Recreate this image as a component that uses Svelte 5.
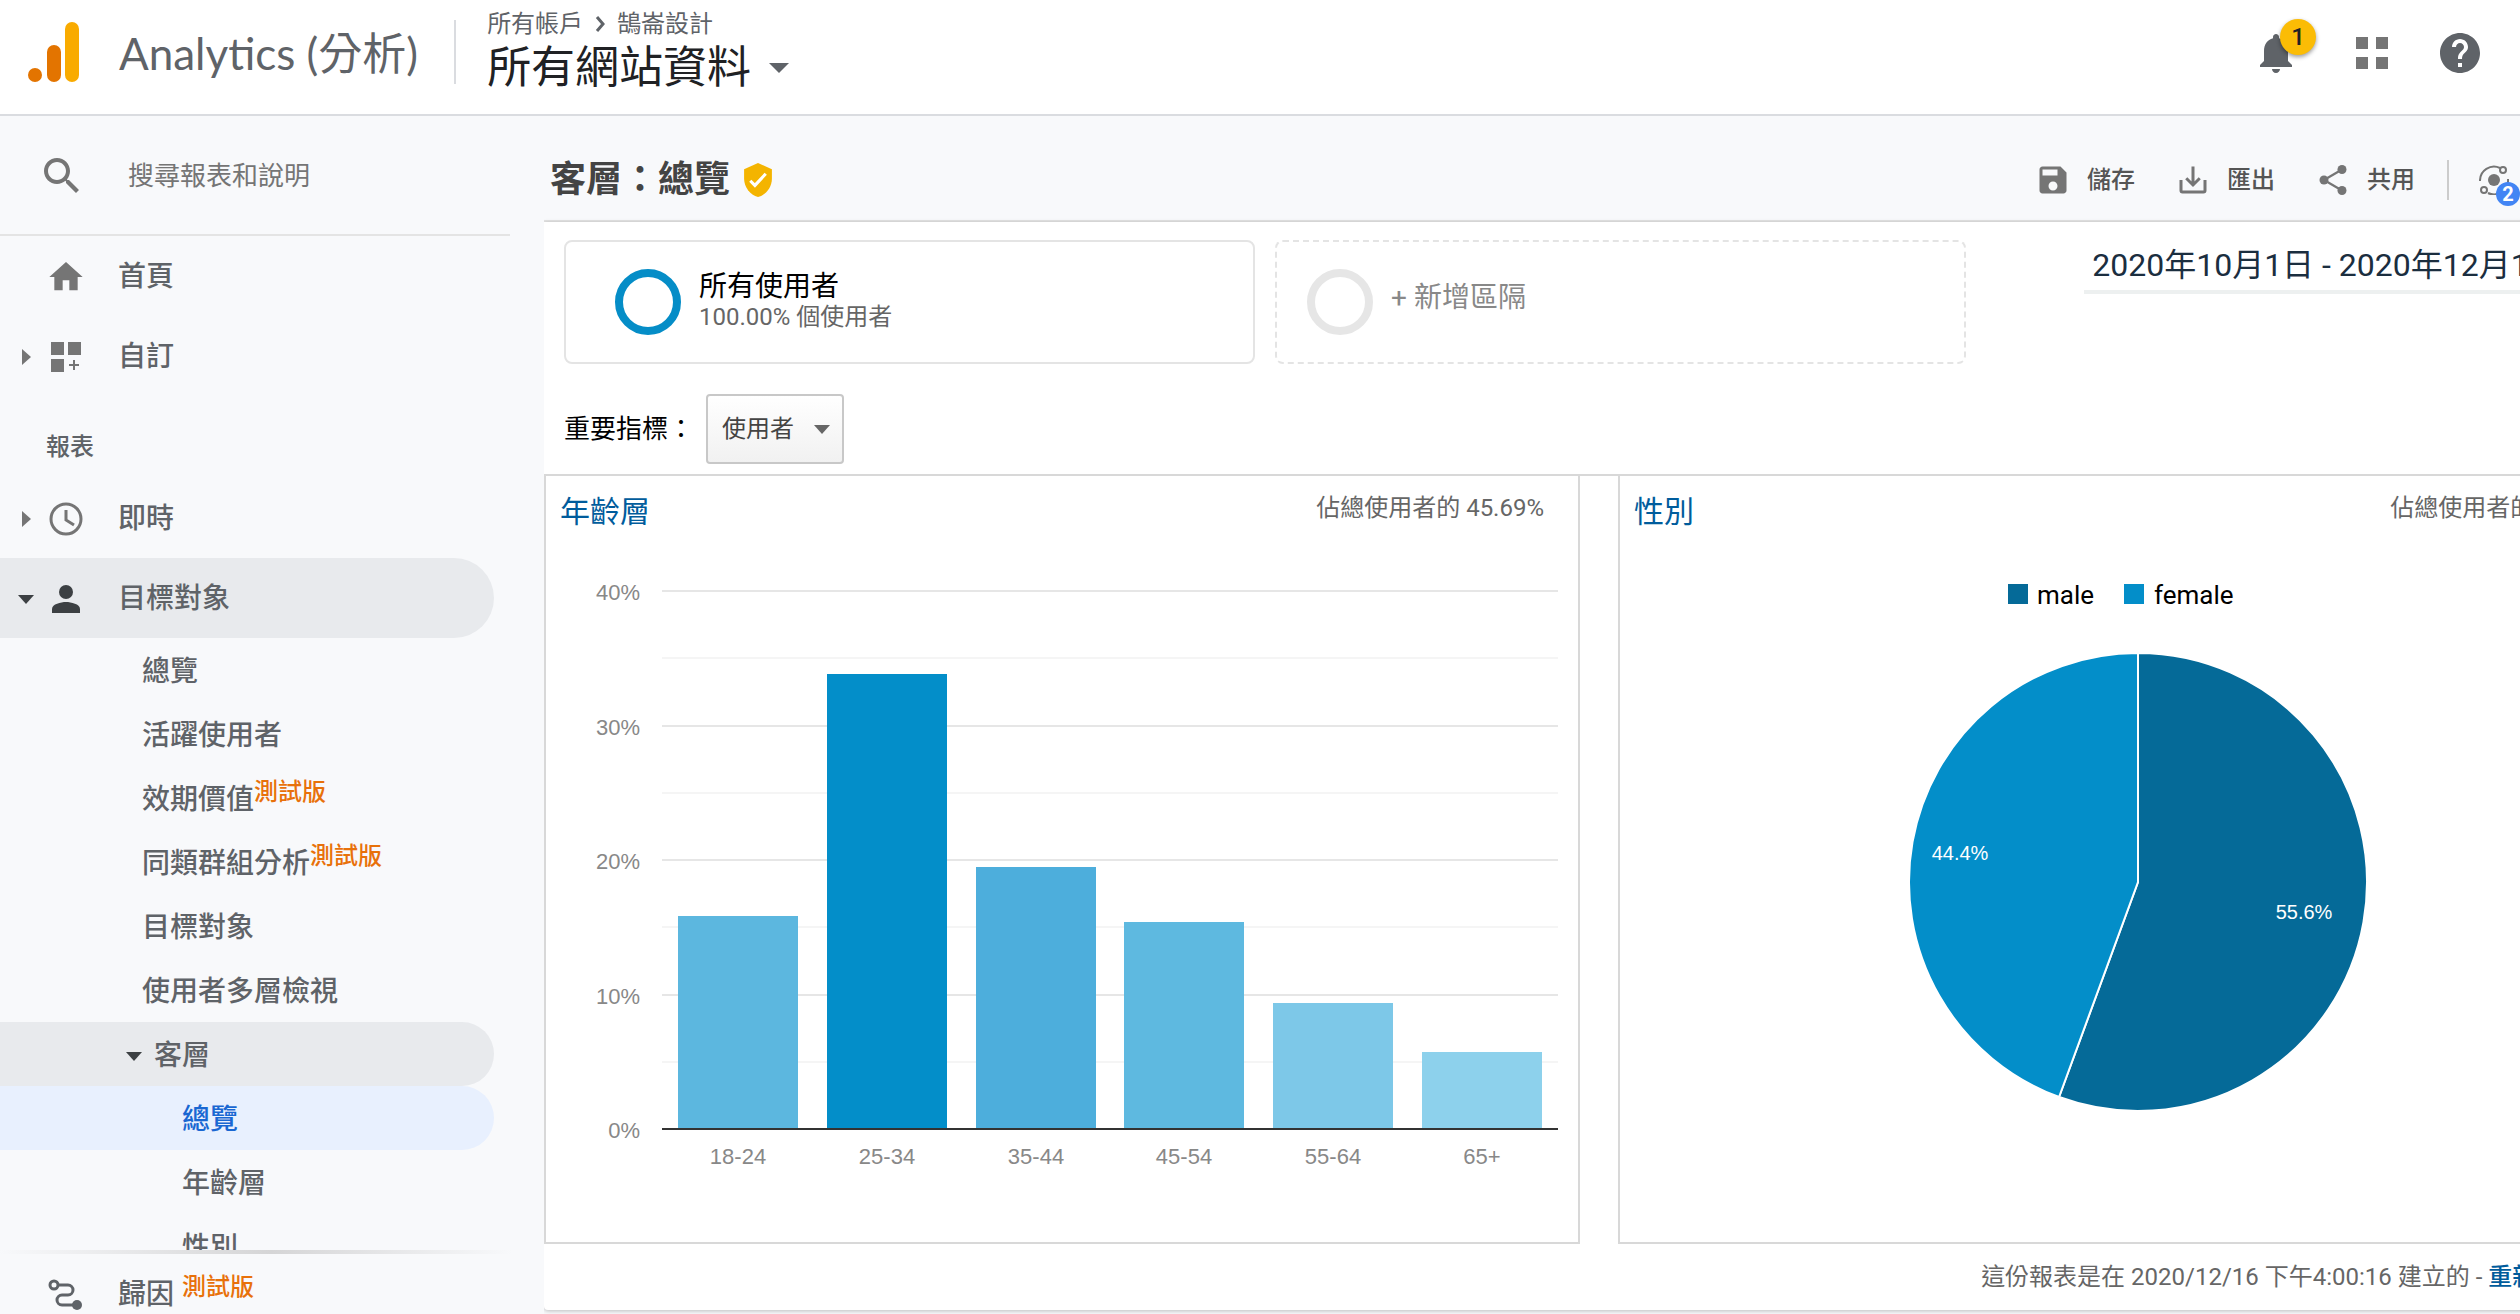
<script lang="ts">
	/**
	 * Analytics demographics overview: top bar, report navigation,
	 * age bar chart and gender pie chart
	 */

	interface NavItem {
		label: string;
		beta?: boolean;
	}

	const audienceItems: NavItem[] = [
		{ label: '總覽' },
		{ label: '活躍使用者' },
		{ label: '效期價值', beta: true },
		{ label: '同類群組分析', beta: true },
		{ label: '目標對象' },
		{ label: '使用者多層檢視' }
	];

	const demographicItems = ['總覽', '年齡層', '性別'];

	const ageGroups = [
		{ label: '18-24', value: 15.8, color: '#5cb7df' },
		{ label: '25-34', value: 33.8, color: '#038ec9' },
		{ label: '35-44', value: 19.5, color: '#4daedc' },
		{ label: '45-54', value: 15.4, color: '#5eb9e0' },
		{ label: '55-64', value: 9.4, color: '#7dc8e8' },
		{ label: '65+', value: 5.7, color: '#8dd1ec' }
	];

	// bar chart geometry, in viewBox units
	const baseline = 583;
	const perPercent = 13.45;
	const ticks = [40, 30, 20, 10, 0];
	const minorTicks = [35, 25, 15, 5];
	const y = (percent: number) => Math.round(baseline - percent * perPercent);
	const barX = (i: number) => Math.round(132 + i * 148.8);

	// pie chart geometry
	const cx = 518;
	const cy = 336;
	const r = 229;
	const male = 55.6;
	const female = 44.4;
	const angle = (male / 100) * Math.PI * 2;
	const splitX = cx + r * Math.sin(angle);
	const splitY = cy - r * Math.cos(angle);
	const malePath = `M${cx} ${cy}V${cy - r}A${r} ${r} 0 1 1 ${splitX} ${splitY}Z`;
	const femalePath = `M${cx} ${cy}L${splitX} ${splitY}A${r} ${r} 0 0 1 ${cx} ${cy - r}Z`;

	let metric = $state('使用者');
	let search = $state('');
</script>

<div class="app">
	<header class="topbar">
		<svg class="logo" viewBox="0 0 52 60" aria-hidden="true">
			<circle cx="7" cy="53" r="7" fill="#e37400" />
			<rect x="19" y="23" width="14" height="37" rx="7" fill="#e37400" />
			<rect x="37" y="0" width="14" height="60" rx="7" fill="#f9ab00" />
		</svg>
		<span class="product">Analytics (分析)</span>
		<div class="account">
			<div class="breadcrumb">
				<span>所有帳戶</span>
				<svg viewBox="0 0 10 16" aria-hidden="true"><path d="M2 1l6 7-6 7" fill="none" stroke="#5f6368" stroke-width="3" /></svg>
				<span>鵠崙設計</span>
			</div>
			<button class="property">
				所有網站資料
				<svg viewBox="0 0 20 10" aria-hidden="true"><path d="M0 0h20L10 10z" fill="#5f6368" /></svg>
			</button>
		</div>
		<div class="top-actions">
			<button class="bell" aria-label="通知">
				<svg viewBox="4 2 16 20" aria-hidden="true">
					<path fill="#5f6368" d="M12 22c1.1 0 2-.9 2-2h-4c0 1.1.89 2 2 2zm6-6v-5c0-3.07-1.64-5.64-4.5-6.32V4c0-.83-.67-1.5-1.5-1.5s-1.5.67-1.5 1.5v.68C7.63 5.36 6 7.92 6 11v5l-2 2v1h16v-1l-2-2z" />
				</svg>
				<span class="badge">1</span>
			</button>
			<button aria-label="應用程式">
				<svg class="apps" viewBox="0 0 32 32" aria-hidden="true">
					<path fill="#757575" d="M0 0h12v12H0zM20 0h12v12H20zM0 20h12v12H0zM20 20h12v12H20z" />
				</svg>
			</button>
			<button aria-label="說明">
				<svg class="help" viewBox="2 2 20 20" aria-hidden="true">
					<path fill="#5f6368" d="M12 2C6.48 2 2 6.48 2 12s4.48 10 10 10 10-4.48 10-10S17.52 2 12 2zm1 17h-2v-2h2v2zm2.07-7.75l-.9.92C13.45 12.9 13 13.5 13 15h-2v-.5c0-1.1.45-2.1 1.17-2.83l1.24-1.26c.37-.36.59-.86.59-1.41 0-1.1-.9-2-2-2s-2 .9-2 2H8c0-2.21 1.79-4 4-4s4 1.79 4 4c0 .88-.36 1.68-.93 2.25z" />
				</svg>
			</button>
		</div>
	</header>

	<div class="body">
		<aside class="sidebar">
			<label class="search">
				<svg viewBox="3 3 18 18" aria-hidden="true">
					<path fill="#757575" d="M15.5 14h-.79l-.28-.27C15.41 12.59 16 11.11 16 9.5 16 5.91 13.09 3 9.5 3S3 5.91 3 9.5 5.91 16 9.5 16c1.61 0 3.09-.59 4.23-1.57l.27.28v.79l5 4.99L20.49 19l-4.99-5zm-6 0C7.01 14 5 11.99 5 9.5S7.01 5 9.5 5 14 7.01 14 9.5 11.99 14 9.5 14z" />
				</svg>
				<input type="text" placeholder="搜尋報表和說明" aria-label="搜尋報表和說明" bind:value={search} />
			</label>

			<nav class="nav">
				<a class="row" href="#home">
					<span class="arrow"></span>
					<svg class="icon" viewBox="0 0 24 24" aria-hidden="true"><path fill="#757575" d="M10 20v-6h4v6h5v-8h3L12 3 2 12h3v8z" /></svg>
					首頁
				</a>
				<a class="row" href="#custom">
					<svg class="arrow" viewBox="0 0 16 16" aria-hidden="true"><path d="M4 0l9 8-9 8z" fill="#757575" /></svg>
					<svg class="icon" viewBox="0 0 40 40" aria-hidden="true">
						<path fill="#757575" d="M5 5h13v13H5zM22 5h13v13H22zM5 22h13v13H5zM27 23h2v4h4v2h-4v4h-2v-4h-4v-2h4z" />
					</svg>
					自訂
				</a>
				<h2 class="section">報表</h2>
				<a class="row" href="#realtime">
					<svg class="arrow" viewBox="0 0 16 16" aria-hidden="true"><path d="M4 0l9 8-9 8z" fill="#757575" /></svg>
					<svg class="icon" viewBox="0 0 40 40" aria-hidden="true">
						<circle cx="20" cy="20" r="15" fill="none" stroke="#757575" stroke-width="3" />
						<path d="M20 11v10l8 5" fill="none" stroke="#757575" stroke-width="3" />
					</svg>
					即時
				</a>
				<a class="row open" href="#audience">
					<svg class="arrow" viewBox="0 0 16 16" aria-hidden="true"><path d="M0 4h16l-8 9z" fill="#3c4043" /></svg>
					<svg class="icon" viewBox="0 0 40 40" aria-hidden="true">
						<circle cx="20" cy="13" r="7" fill="#3c4043" />
						<path d="M6 34v-4c0-5 9-7 14-7s14 2 14 7v4z" fill="#3c4043" />
					</svg>
					目標對象
				</a>
				{#each audienceItems as item, i (i)}
					<a class="sub" href="#audience-{i}">
						{item.label}{#if item.beta}<span class="beta">測試版</span>{/if}
					</a>
				{/each}
				<a class="sub group" href="#demographics">
					<svg viewBox="0 0 16 16" aria-hidden="true"><path d="M0 4h16l-8 9z" fill="#3c4043" /></svg>
					客層
				</a>
				{#each demographicItems as label, i (label)}
					<a class="sub leaf" class:active={i === 0} href="#demographics-{i}">{label}</a>
				{/each}
			</nav>

			<div class="pinned">
				<a class="row" href="#attribution">
					<span class="arrow"></span>
					<svg class="icon" viewBox="0 0 40 40" aria-hidden="true">
						<circle cx="8" cy="10" r="4" fill="none" stroke="#5f6368" stroke-width="3" />
						<path d="M12 10h10a5 5 0 0 1 5 5 5 5 0 0 1-5 5h-6a5 5 0 0 0-5 5 5 5 0 0 0 5 5h12" fill="none" stroke="#5f6368" stroke-width="3" />
						<circle cx="31" cy="30" r="5" fill="#5f6368" />
					</svg>
					歸因<span class="beta spaced">測試版</span>
				</a>
			</div>
		</aside>

		<main class="main">
			<div class="toolbar">
				<h1>客層：總覽</h1>
				<svg class="shield" viewBox="3 1 18 22" aria-label="已驗證" role="img">
					<path fill="#f4b400" d="M12 1L3 5v6c0 5.55 3.84 10.74 9 12 5.16-1.26 9-6.45 9-12V5z" />
					<path fill="none" stroke="#fff" stroke-width="2" d="M7 12.5l3 3 7-7.5" />
				</svg>
				<div class="tools">
					<button class="tool">
						<svg viewBox="0 0 24 24" aria-hidden="true"><path fill="#757575" d="M17 3H5c-1.11 0-2 .9-2 2v14c0 1.1.89 2 2 2h14c1.1 0 2-.9 2-2V7l-4-4zm-5 16c-1.66 0-3-1.34-3-3s1.34-3 3-3 3 1.34 3 3-1.34 3-3 3zm3-10H5V5h10v4z" /></svg>
						儲存
					</button>
					<button class="tool">
						<svg viewBox="0 0 24 24" aria-hidden="true"><path fill="none" stroke="#757575" stroke-width="2" d="M4 12v7a1 1 0 0 0 1 1h14a1 1 0 0 0 1-1v-7M12 3v12M7.500 10.800L12 15.300l4.500-4.500" /></svg>
						匯出
					</button>
					<button class="tool">
						<svg viewBox="0 0 24 24" aria-hidden="true">
							<path fill="none" stroke="#757575" stroke-width="1.500" d="M18 5L6 12l12 7" />
							<g fill="#757575"><circle cx="18" cy="5" r="3" /><circle cx="6" cy="12" r="3" /><circle cx="18" cy="19" r="3" /></g>
						</svg>
						共用
					</button>
					<button class="insights" aria-label="深入分析">
						<svg viewBox="0 0 30 30" aria-hidden="true">
							<g fill="none" stroke="#757575" stroke-width="2">
								<path d="M1 16A14 14 0 0 1 21 3M29 14A14 14 0 0 1 9 28" />
								<circle cx="24" cy="5" r="3" />
								<circle cx="5" cy="25" r="3" />
							</g>
							<circle cx="15" cy="15" r="6" fill="#757575" />
						</svg>
						<span class="count">2</span>
					</button>
				</div>
			</div>

			<section class="report">
				<div class="segments">
					<button class="segment">
						<span class="ring"></span>
						<span class="segment-text">
							<span class="segment-name">所有使用者</span>
							<span class="segment-share">100.00% 個使用者</span>
						</span>
					</button>
					<button class="segment add">
						<span class="ring"></span>
						<span class="add-label">+ 新增區隔</span>
					</button>
					<button class="dates">2020年10月1日 - 2020年12月15日</button>
				</div>

				<div class="metric">
					<label for="metric">重要指標：</label>
					<div class="select">
						<select id="metric" bind:value={metric}>
							<option>使用者</option>
						</select>
						<svg viewBox="0 0 16 9" aria-hidden="true"><path d="M0 0h16l-8 9z" fill="#666" /></svg>
					</div>
				</div>

				<div class="cards">
					<article class="card">
						<div class="card-head">
							<a href="#age">年齡層</a>
							<span>佔總使用者的 45.69%</span>
						</div>
						<svg class="chart" viewBox="0 0 1032 696" role="img" aria-label="年齡層">
							{#each minorTicks as tick (tick)}
								<rect x="116" y={y(tick) - 1} width="896" height="2" fill="#f5f5f5" />
							{/each}
							{#each ticks as tick (tick)}
								<rect x="116" y={y(tick) - 1} width="896" height="2" fill="#e6e6e6" />
								<text class="tick" x="94" y={y(tick) + 9} text-anchor="end">{tick}%</text>
							{/each}
							{#each ageGroups as group, i (group.label)}
								<rect x={barX(i)} y={y(group.value)} width="120" height={baseline - y(group.value)} fill={group.color} />
								<text class="tick" x={barX(i) + 60} y="618" text-anchor="middle">{group.label}</text>
							{/each}
							<rect x="116" y={baseline - 1} width="896" height="2" fill="#333" />
						</svg>
					</article>

					<article class="card">
						<div class="card-head">
							<a href="#gender">性別</a>
							<span>佔總使用者的 45.69%</span>
						</div>
						<svg class="chart" viewBox="0 0 1032 696" role="img" aria-label="性別">
							<rect x="388" y="38" width="20" height="20" fill="#056a98" />
							<text class="legend" x="417" y="58">male</text>
							<rect x="504" y="38" width="20" height="20" fill="#038ec9" />
							<text class="legend" x="534" y="58">female</text>
							<path d={malePath} fill="#056a98" stroke="#fff" stroke-width="2" />
							<path d={femalePath} fill="#038ec9" stroke="#fff" stroke-width="2" />
							<text class="slice" x="340" y="314">{female}%</text>
							<text class="slice" x="684" y="373">{male}%</text>
						</svg>
					</article>
				</div>

				<p class="generated">這份報表是在 2020/12/16 下午4:00:16 建立的 - <a href="#refresh">重新整理報表</a></p>
			</section>
		</main>
	</div>
</div>

<style>
	:global(body) {
		margin: 0;
		background: #f8f9fb;
	}

	.app {
		height: 100vh;
		display: flex;
		flex-direction: column;
		overflow: hidden;
		font-family: Roboto, 'Noto Sans CJK TC', sans-serif;
		font-size: 24px;
		line-height: 32px;
		color: #5f6368;
	}

	button {
		border: 0;
		padding: 0;
		background: none;
		font: inherit;
		color: inherit;
		text-align: left;
		cursor: pointer;
	}

	a {
		text-decoration: none;
	}

	svg {
		display: block;
		flex: none;
	}

	.topbar {
		flex: none;
		height: 114px;
		display: flex;
		background: #fff;
		border-bottom: 2px solid #dadce0;
	}

	.logo {
		width: 52px;
		height: 60px;
		margin: 22px 39px 0 28px;
	}

	.product {
		margin-top: 23px;
		font-family: Lato, 'Noto Sans CJK TC', sans-serif;
		font-size: 44px;
		line-height: 60px;
		white-space: nowrap;
	}

	.account {
		height: 64px;
		margin: 20px 0 0 36px;
		padding-left: 31px;
		border-left: 2px solid #dadce0;
	}

	.breadcrumb {
		display: flex;
		align-items: center;
		gap: 12px;
		margin-top: -12px;
	}

	.breadcrumb svg {
		width: 10px;
		height: 16px;
	}

	.property {
		display: flex;
		align-items: center;
		gap: 18px;
		font-size: 44px;
		line-height: 56px;
		color: #202124;
	}

	.property svg {
		width: 20px;
		height: 10px;
	}

	.top-actions {
		display: flex;
		align-items: center;
		height: 106px;
		margin-left: auto;
		padding-right: 40px;
	}

	.bell {
		position: relative;
		margin-right: 64px;
	}

	.bell svg {
		width: 32px;
		height: 40px;
	}

	.badge {
		position: absolute;
		top: -14px;
		left: 20px;
		width: 36px;
		height: 36px;
		border-radius: 18px;
		background: #fbbc05;
		box-shadow: 0 2px 4px rgba(0, 0, 0, 0.4);
		color: #202124;
		font-weight: 500;
		line-height: 36px;
		text-align: center;
	}

	.apps {
		width: 32px;
		height: 32px;
		margin-right: 52px;
	}

	.help {
		width: 40px;
		height: 40px;
	}

	.body {
		flex: 1;
		min-height: 0;
		display: flex;
	}

	.sidebar {
		flex: none;
		width: 544px;
		display: flex;
		flex-direction: column;
	}

	.search {
		flex: none;
		display: flex;
		align-items: center;
		height: 116px;
		width: 466px;
		padding: 2px 0 0 44px;
		border-bottom: 2px solid #e4e4e4;
	}

	.search svg {
		width: 36px;
		height: 36px;
	}

	.search input {
		width: 320px;
		margin-left: 48px;
		padding: 0;
		border: 0;
		outline: 0;
		background: none;
		font: inherit;
		font-size: 26px;
		color: #5f6368;
	}

	.search input::placeholder {
		color: #757575;
		opacity: 1;
	}

	.nav {
		flex: 1;
		min-height: 0;
		overflow: hidden;
		width: 494px;
	}

	.row,
	.sub {
		display: flex;
		align-items: center;
		font-size: 28px;
		font-weight: 500;
		color: #5f6368;
		box-sizing: border-box;
	}

	.row {
		height: 80px;
		padding: 2px 0 0 18px;
	}

	.sub {
		height: 64px;
		padding: 4px 0 0 142px;
		border-radius: 0 32px 32px 0;
	}

	.arrow {
		width: 16px;
		height: 16px;
		margin-right: 12px;
	}

	.icon {
		width: 40px;
		height: 40px;
		margin-right: 32px;
	}

	.open,
	.group {
		background: #e8eaed;
	}

	.open {
		border-radius: 0 40px 40px 0;
	}

	.section {
		margin: 0;
		padding: 10px 0 0 46px;
		font-size: 24px;
		font-weight: 500;
		line-height: 82px;
		height: 82px;
		box-sizing: border-box;
	}

	.group {
		padding-left: 126px;
		gap: 12px;
	}

	.group svg {
		width: 16px;
		height: 16px;
	}

	.leaf {
		padding-left: 182px;
	}

	.active {
		background: #e8f0fe;
		color: #1967d2;
	}

	.beta {
		margin-bottom: 16px;
		font-size: 24px;
		color: #e8710a;
	}

	.spaced {
		margin-left: 8px;
	}

	.pinned {
		flex: none;
		height: 60px;
		overflow: hidden;
		border-top: 4px solid;
		border-image: linear-gradient(90deg, #f8f9fb, #d5d5d6 50%, #f8f9fb 94%) 1;
	}

	.main {
		flex: 1;
		min-width: 0;
		overflow: hidden;
	}

	.toolbar {
		display: flex;
		align-items: center;
		height: 106px;
		padding: 24px 0 0 6px;
		box-sizing: border-box;
		border-bottom: 2px solid #e4e4e4;
	}

	h1 {
		margin: 0;
		font-size: 36px;
		font-weight: 700;
		line-height: 48px;
		color: #444;
	}

	.shield {
		width: 28px;
		height: 34px;
		margin-left: 14px;
	}

	.tools {
		display: flex;
		align-items: center;
		margin-left: auto;
	}

	.tool {
		display: flex;
		align-items: center;
		gap: 16px;
		width: 140px;
		font-weight: 500;
		color: #555;
	}

	.tool svg {
		width: 36px;
		height: 36px;
	}

	.insights {
		position: relative;
		height: 40px;
		padding: 0 11px 0 30px;
		border-left: 2px solid #ccc;
		margin-left: -8px;
	}

	.insights svg {
		width: 30px;
		height: 30px;
	}

	.count {
		position: absolute;
		right: 0;
		bottom: -6px;
		width: 24px;
		height: 24px;
		border-radius: 12px;
		background: #4285f4;
		color: #fff;
		font-size: 20px;
		font-weight: 700;
		line-height: 24px;
		text-align: center;
	}

	/* the report is wider than its column and runs off the right edge */
	.report {
		width: 107%;
		background: #fff;
		border-radius: 0 0 4px 4px;
		box-shadow: 0 1px 4px rgba(0, 0, 0, 0.25);
	}

	.segments {
		display: flex;
		align-items: flex-start;
		gap: 20px;
		padding: 18px 0 0 20px;
	}

	.segment {
		display: flex;
		align-items: center;
		gap: 18px;
		width: 33%;
		height: 124px;
		padding-left: 49px;
		box-sizing: border-box;
		border: 2px solid #e4e4e4;
		border-radius: 8px;
	}

	.segment.add {
		padding-left: 30px;
		border-style: dashed;
	}

	.ring {
		width: 66px;
		height: 66px;
		box-sizing: border-box;
		border: 8px solid #058dc7;
		border-radius: 50%;
	}

	.add .ring {
		border-color: #e6e6e6;
	}

	.segment-text {
		display: flex;
		flex-direction: column;
	}

	.segment-name {
		font-size: 28px;
		line-height: 30px;
		color: #000;
	}

	.segment-share {
		line-height: 30px;
		color: #666;
	}

	.add-label {
		padding-bottom: 8px;
		font-size: 28px;
		color: #888;
	}

	.dates {
		margin-left: 98px;
		padding: 5px 24px 5px 8px;
		border-bottom: 4px solid #edf0f0;
		font-size: 32px;
		line-height: 40px;
		white-space: nowrap;
		color: #1b2e3f;
	}

	.metric {
		display: flex;
		align-items: center;
		gap: 12px;
		height: 70px;
		padding: 30px 0 10px 20px;
		font-size: 26px;
		color: #000;
	}

	.select {
		display: grid;
		align-items: center;
	}

	.select select,
	.select svg {
		grid-area: 1 / 1;
	}

	.select select {
		appearance: none;
		width: 138px;
		height: 70px;
		padding: 0 14px;
		border: 2px solid #c8c8c8;
		border-radius: 4px;
		background: linear-gradient(#fff, #f1f1f1);
		font: inherit;
		font-size: 24px;
		color: #444;
	}

	.select svg {
		width: 16px;
		height: 9px;
		justify-self: end;
		margin-right: 14px;
		pointer-events: none;
	}

	.cards {
		display: grid;
		grid-template-columns: 49% 49%;
		gap: 38px;
		border-top: 2px solid #d8d8d8;
	}

	.card {
		border: 2px solid #d8d8d8;
		border-top: 0;
	}

	.card-head {
		display: flex;
		justify-content: space-between;
		padding: 16px 34px 0 14px;
		height: 54px;
	}

	.card-head a {
		font-size: 30px;
		line-height: 40px;
		color: #005c9c;
	}

	.card-head span {
		color: #666;
	}

	.chart {
		width: 100%;
	}

	.tick {
		font-family: 'Liberation Sans', sans-serif;
		font-size: 22px;
		fill: #888;
	}

	.legend {
		font-size: 26px;
		fill: #000;
	}

	.slice {
		font-family: 'Liberation Sans', sans-serif;
		font-size: 20px;
		fill: #fff;
		text-anchor: middle;
	}

	.generated {
		margin: 0;
		padding: 17px 26px;
		text-align: right;
		color: #666;
	}

	.generated a {
		font-weight: 500;
		color: #005c9c;
	}
</style>
